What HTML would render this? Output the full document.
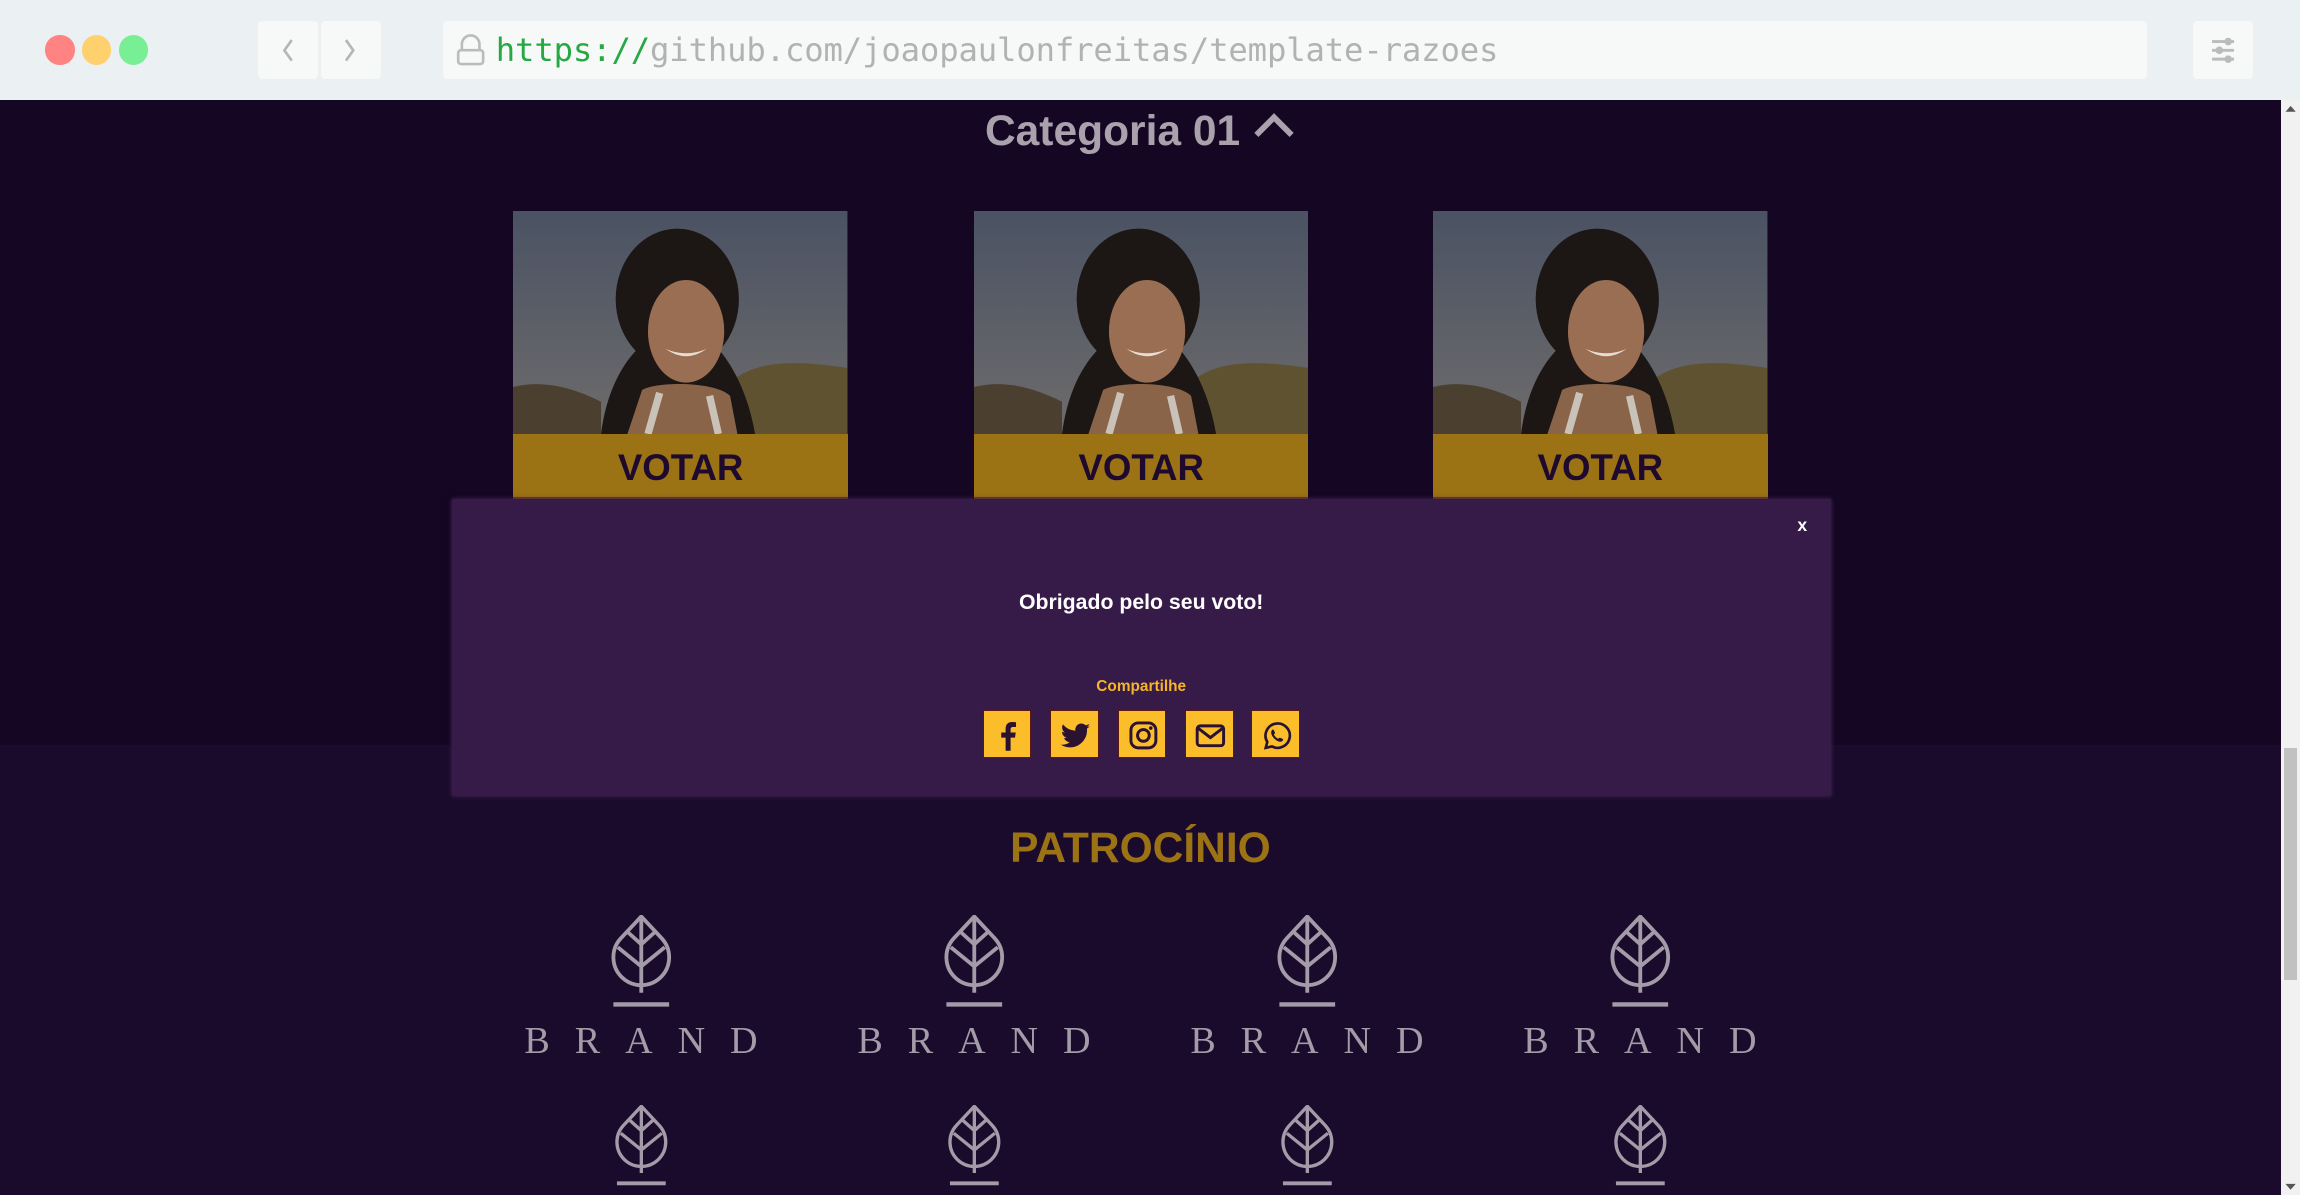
<!DOCTYPE html>
<html><head><meta charset="utf-8"><style>
*{margin:0;padding:0;box-sizing:border-box}
html,body{width:2300px;height:1195px;overflow:hidden;background:#ebf0f3}
#w{zoom:1.46684;width:1568px;height:815px;position:relative;font-family:"Liberation Sans",sans-serif}
.abs{position:absolute}
.dot{position:absolute;top:24px;width:20px;height:20px;border-radius:50%}
.btn{position:absolute;top:14px;height:40px;background:#f7f9f9;border-radius:3px}
.page{position:absolute;left:0;top:68px;width:1555px;height:747px;background:#150623;overflow:hidden}
.low{position:absolute;left:0;top:440px;width:1555px;height:310px;background:#1a0b2c}
.card{position:absolute;top:76px;width:228px;height:196px}
.card svg{display:block}
.vote{position:absolute;left:0;top:152px;width:228px;height:44px;background:#9b7214;color:#1e0a2e;font:bold 25px "Liberation Sans",sans-serif;text-align:center;line-height:46px;border-bottom:2px solid #6a3a16}
.modal{position:absolute;left:308px;top:272px;width:940px;height:203px;background:#361a48;box-shadow:0 0 3px #4a2a5a}
.soc{position:absolute;top:144px;width:33px;height:33px;background:#fbbd2a;border:1px solid #5a1a10}
.soc svg{position:absolute;left:6px;top:6px}
.brand{position:absolute;width:200px;text-align:center}
.bt{font:26px "Liberation Serif",serif;color:#a39ba8;letter-spacing:17px;padding-left:17px;line-height:28px}
</style></head><body><div id="w">
<div class="dot" style="left:31px;background:#ff8383"></div>
<div class="dot" style="left:56px;background:#ffd16e"></div>
<div class="dot" style="left:81px;background:#78ef95"></div>
<div class="btn" style="left:176px;width:41px"><svg width="41" height="40"><path d="M23 13l-5 7 5 7" stroke="#b5b5b5" stroke-width="1.8" fill="none"/></svg></div>
<div class="btn" style="left:219px;width:41px"><svg width="41" height="40"><path d="M17 13l5 7-5 7" stroke="#b5b5b5" stroke-width="1.8" fill="none"/></svg></div>
<div class="btn" style="left:302px;width:1162px">
<svg class="abs" style="left:9px;top:9px" width="20" height="22"><path d="M4 11V7a6 6 0 0 1 12 0v4" stroke="#bbb" stroke-width="1.8" fill="none"/><rect x="1.5" y="11" width="17" height="9.5" rx="2" stroke="#bbb" stroke-width="1.8" fill="none"/></svg>
<div class="abs" style="left:36px;top:7px;font:22px 'DejaVu Sans Mono','Liberation Mono',monospace;white-space:nowrap;letter-spacing:-0.1px"><span style="color:#26a843">https://</span><span style="color:#b2b2b2">github.com/joaopaulonfreitas/template-razoes</span></div>
</div>
<div class="btn" style="left:1495px;width:41px"><svg width="41" height="40"><g stroke="#bbb" stroke-width="2"><path d="M13 14h15M13 20h15M13 26h15"/></g><g fill="#bbb"><circle cx="24" cy="14" r="2.6"/><circle cx="18" cy="20" r="2.6"/><circle cx="24" cy="26" r="2.6"/></g></svg></div>
<div class="abs" style="left:1555px;top:68px;width:13px;height:747px;background:#f1f1f1"></div>
<div class="abs" style="left:1557px;top:510px;width:9px;height:158px;background:#c1c1c1"></div>
<svg class="abs" style="left:1557px;top:70px" width="9" height="8"><path d="M1 6l3.5-4 3.5 4z" fill="#555"/></svg>
<svg class="abs" style="left:1557px;top:805px" width="9" height="8"><path d="M1 2l3.5 4 3.5-4z" fill="#555"/></svg>

<div class="page">
<div class="low"></div>
<div class="abs" style="left:0;width:1555px;top:5px;text-align:center;font:bold 29px 'Liberation Sans',sans-serif;color:#a9a2ad">Categoria 01 <svg width="30" height="20" style="vertical-align:4px"><path d="M3 17L15 5l12 12" stroke="#a9a2ad" stroke-width="4" fill="none"/></svg></div>

<div class="card" style="left:350px"><svg width="228" height="152"><defs><linearGradient id="sk" x1="0" y1="0" x2="0" y2="1"><stop offset="0" stop-color="#4a5263"/><stop offset="1" stop-color="#6e6c6c"/></linearGradient></defs><rect width="228" height="152" fill="url(#sk)"/><path d="M150 115c20-15 50-12 78-8v45H140z" fill="#5f5230"/><path d="M0 120c20-5 40 0 60 10v22H0z" fill="#4b4030"/><ellipse cx="112" cy="60" rx="42" ry="48" fill="#1c1614"/><path d="M60 152c5-40 25-65 45-70h20c20 10 35 40 40 70z" fill="#1c1614"/><ellipse cx="118" cy="82" rx="26" ry="35" fill="#9a6e52"/><path d="M104 94q14 10 28 0q-14 6-28 0z" fill="#e4ddd4"/><path d="M78 152l10-30c10-6 50-6 60 4l5 26z" fill="#8a6448"/><path d="M92 152l8-28M140 152l-6-26" stroke="#c9c2b8" stroke-width="5"/></svg><div class="vote">VOTAR</div></div>
<div class="card" style="left:664px"><svg width="228" height="152"><rect width="228" height="152" fill="url(#sk)"/><path d="M150 115c20-15 50-12 78-8v45H140z" fill="#5f5230"/><path d="M0 120c20-5 40 0 60 10v22H0z" fill="#4b4030"/><ellipse cx="112" cy="60" rx="42" ry="48" fill="#1c1614"/><path d="M60 152c5-40 25-65 45-70h20c20 10 35 40 40 70z" fill="#1c1614"/><ellipse cx="118" cy="82" rx="26" ry="35" fill="#9a6e52"/><path d="M104 94q14 10 28 0q-14 6-28 0z" fill="#e4ddd4"/><path d="M78 152l10-30c10-6 50-6 60 4l5 26z" fill="#8a6448"/><path d="M92 152l8-28M140 152l-6-26" stroke="#c9c2b8" stroke-width="5"/></svg><div class="vote">VOTAR</div></div>
<div class="card" style="left:977px"><svg width="228" height="152"><rect width="228" height="152" fill="url(#sk)"/><path d="M150 115c20-15 50-12 78-8v45H140z" fill="#5f5230"/><path d="M0 120c20-5 40 0 60 10v22H0z" fill="#4b4030"/><ellipse cx="112" cy="60" rx="42" ry="48" fill="#1c1614"/><path d="M60 152c5-40 25-65 45-70h20c20 10 35 40 40 70z" fill="#1c1614"/><ellipse cx="118" cy="82" rx="26" ry="35" fill="#9a6e52"/><path d="M104 94q14 10 28 0q-14 6-28 0z" fill="#e4ddd4"/><path d="M78 152l10-30c10-6 50-6 60 4l5 26z" fill="#8a6448"/><path d="M92 152l8-28M140 152l-6-26" stroke="#c9c2b8" stroke-width="5"/></svg><div class="vote">VOTAR</div></div>

<div class="modal">
<div class="abs" style="right:16px;top:11px;color:#fff;font:bold 12px 'Liberation Sans',sans-serif">x</div>
<div class="abs" style="left:0;width:940px;top:62px;text-align:center;color:#fff;font:bold 14.5px 'Liberation Sans',sans-serif">Obrigado pelo seu voto!</div>
<div class="abs" style="left:0;width:940px;top:122px;text-align:center;color:#f5b52a;font:bold 10.5px 'Liberation Sans',sans-serif">Compartilhe</div>
<div class="soc" style="left:362px"><svg width="21" height="21"><path d="M12 21v-9h3l.5-3.5H12V6.5c0-1 .4-1.7 1.8-1.7h1.9V1.6C15 1.5 14 1.4 13 1.4c-2.7 0-4.4 1.6-4.4 4.6v2.5H5.6V12h3v9z" fill="#2a1230"/></svg></div>
<div class="soc" style="left:408px"><svg width="21" height="21"><path d="M20.5 4.2c-.7.3-1.5.5-2.3.6.8-.5 1.5-1.3 1.8-2.2-.8.5-1.700.8-2.6 1A4.1 4.1 0 0 0 10.5 7.3 11.6 11.6 0 0 1 2 3c-1.1 1.9-.5 4.3 1.3 5.500-.7 0-1.3-.2-1.9-.5 0 2 1.4 3.7 3.3 4.1-.6.2-1.2.2-1.9.1.5 1.7 2.1 2.8 3.8 2.9A8.2 8.2 0 0 1 .5 16.8 11.6 11.6 0 0 0 18.4 6.4V5.9c.8-.5 1.5-1.1 2.1-1.7z" fill="#2a1230"/></svg></div>
<div class="soc" style="left:454px"><svg width="21" height="21"><rect x="2" y="2" width="17" height="17" rx="5" stroke="#2a1230" stroke-width="2" fill="none"/><circle cx="10.5" cy="10.5" r="4" stroke="#2a1230" stroke-width="2" fill="none"/><circle cx="15.5" cy="5.5" r="1.2" fill="#2a1230"/></svg></div>
<div class="soc" style="left:500px"><svg width="21" height="21"><rect x="1.5" y="4" width="18" height="13.5" rx="2" stroke="#2a1230" stroke-width="2" fill="none"/><path d="M2 5.5l8.5 6.5 8.5-6.5" stroke="#2a1230" stroke-width="2" fill="none"/></svg></div>
<div class="soc" style="left:545px"><svg width="21" height="21"><path d="M3.2 19l1.1-4A8.3 8.3 0 1 1 7.5 18z" stroke="#2a1230" stroke-width="1.8" fill="none"/><path d="M7.5 6.8c.4-.4 1-.4 1.2 0l.8 1.8c.1.3 0 .6-.3.9l-.4.5c.6 1.2 1.6 2.2 2.8 2.8l.5-.4c.3-.3.6-.4.9-.3l1.8.8c.4.2.4.8 0 1.2-.8.9-2 1-3.4.3a9 9 0 0 1-4-4c-.7-1.4-.6-2.6.1-3.600z" fill="#2a1230"/></svg></div>
</div>

<div class="abs" style="left:0;width:1555px;top:494px;text-align:center;font:bold 29px 'Liberation Sans',sans-serif;color:#9b7214">PATROCÍNIO</div>

<svg width="0" height="0" style="position:absolute"><defs><g id="leaf" stroke="#a39ba8" stroke-width="2.6" fill="none"><path d="M22 1L8 16A19 19 0 1 0 36 16z"/><path d="M22 1V53M22 20L12 11M22 20L32 11M22 35L6 22M22 35L38 22"/><path d="M3 61H41" stroke-width="3"/></g></defs></svg>
<div class="brand" style="left:337px;top:556px"><svg width="44" height="64"><use href="#leaf"/></svg><div class="bt" style="margin-top:4px">BRAND</div></div>
<div class="brand" style="left:564px;top:556px"><svg width="44" height="64"><use href="#leaf"/></svg><div class="bt" style="margin-top:4px">BRAND</div></div>
<div class="brand" style="left:791px;top:556px"><svg width="44" height="64"><use href="#leaf"/></svg><div class="bt" style="margin-top:4px">BRAND</div></div>
<div class="brand" style="left:1018px;top:556px"><svg width="44" height="64"><use href="#leaf"/></svg><div class="bt" style="margin-top:4px">BRAND</div></div>
<div class="brand" style="left:337px;top:685px"><svg viewBox="0 0 44 64" style="width:40px;height:56px"><use href="#leaf"/></svg></div>
<div class="brand" style="left:564px;top:685px"><svg viewBox="0 0 44 64" style="width:40px;height:56px"><use href="#leaf"/></svg></div>
<div class="brand" style="left:791px;top:685px"><svg viewBox="0 0 44 64" style="width:40px;height:56px"><use href="#leaf"/></svg></div>
<div class="brand" style="left:1018px;top:685px"><svg viewBox="0 0 44 64" style="width:40px;height:56px"><use href="#leaf"/></svg></div>
</div>
</div></body></html>
